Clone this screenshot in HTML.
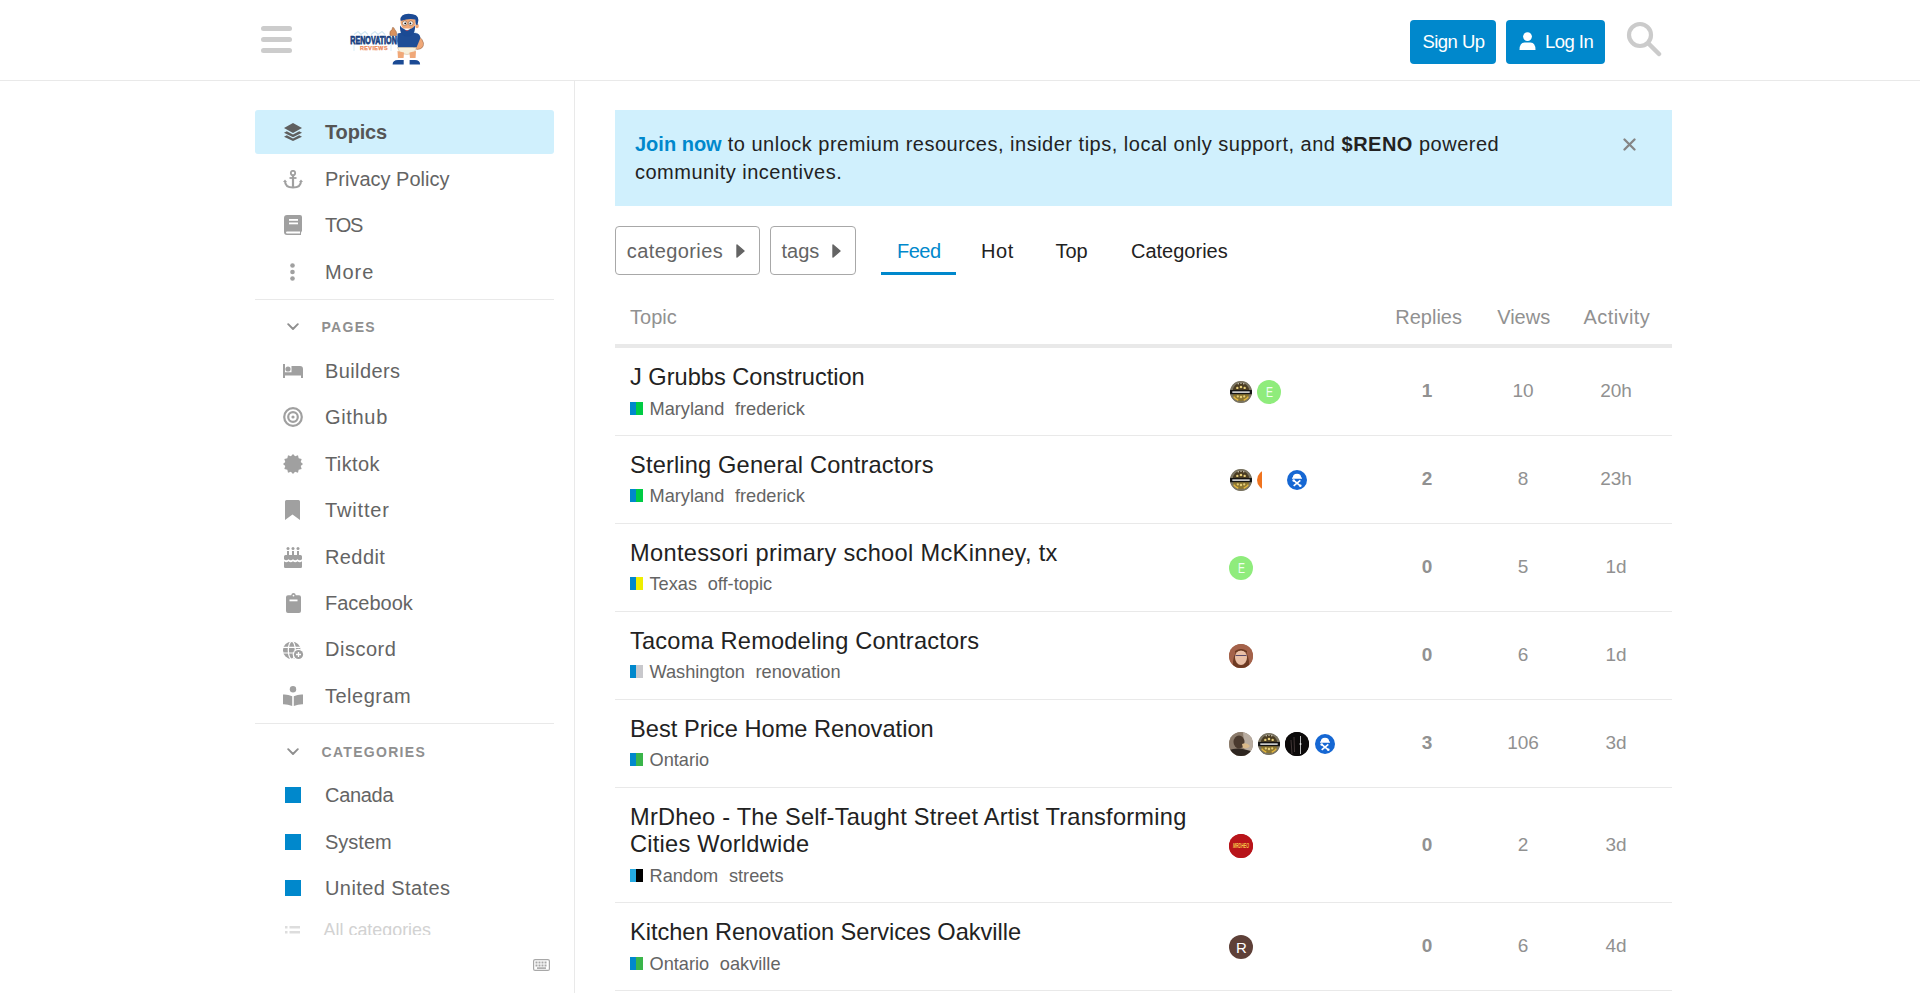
<!DOCTYPE html>
<html><head><meta charset="utf-8"><title>Renovation Reviews</title>
<style>
html,body{margin:0;padding:0;background:#fff;width:1920px;height:993px;overflow:hidden}
body{position:relative;font-family:"Liberation Sans",sans-serif}
.t{position:absolute;white-space:nowrap;line-height:1}
.r{position:absolute;display:block}
</style></head><body>
<div class="r" style="left:0px;top:80px;width:1920px;height:1px;background:#e9e9e9"></div>
<div class="r" style="left:261px;top:26px;width:31px;height:5px;background:#cccccc;border-radius:3px"></div>
<div class="r" style="left:261px;top:37px;width:31px;height:5px;background:#cccccc;border-radius:3px"></div>
<div class="r" style="left:261px;top:48px;width:31px;height:5px;background:#cccccc;border-radius:3px"></div>
<svg class="r" style="left:349px;top:13px;" width="78" height="52" viewBox="0 0 78 52">
<g>
<path d="M5 21.5 L9 18.5 L12 21.5 L16 18.5 L19 21.5 M22 21.5 L26 18.5 L29 21.5 L33 18.5 L36 21.5 M58 21 L64 18 L70 22" stroke="#d3e8f3" stroke-width="1.3" fill="none"/>
<path d="M5 27 L5 38 M42 27 L42 38" stroke="#d6ebf5" stroke-width="0.9"/>
<text x="1.3" y="30.5" font-family="Liberation Sans" font-weight="700" font-size="11" fill="#173f80" stroke="#173f80" stroke-width="0.75" textLength="46.5" lengthAdjust="spacingAndGlyphs">RENOVATION</text>
<text x="11" y="36.6" font-family="Liberation Sans" font-weight="700" font-size="5.4" fill="#ee8a58" stroke="#ee8a58" stroke-width="0.25" textLength="27.5" lengthAdjust="spacing">REVIEWS</text>
<path d="M41 22.5 Q40 18 43 16.5 L43.5 14.5 Q45 14 45.5 16 L46 17 Q48 18 47.5 22.5 Z" fill="#d9925e" stroke="#7a4a2a" stroke-width=".4"/>
<path d="M64 22 Q72 22 74.5 30 Q75 36 68 36.5 L64 34 Z" fill="#f0a878" stroke="#6b3b20" stroke-width=".4"/>
<path d="M48.5 20.5 Q58 17.5 68.5 20.5 Q72 22 71 26 L67.5 34.5 L49 34.5 Q47.5 28 48.5 20.5 Z" fill="#1e4d96"/>
<path d="M48.5 34.5 L67.5 34.5 L65 40 Q58 43 51 40 Z" fill="#f7f0dc" stroke="#bfa77f" stroke-width=".4"/>
<path d="M48.5 38 L55 39.5 L54.5 46 L49 46 Z M60.5 39.5 L67 38 L66.5 46 L61 46 Z" fill="#f0a878"/>
<rect x="48.5" y="45" width="6.5" height="2.5" fill="#fff"/><rect x="60.5" y="45" width="6.5" height="2.5" fill="#fff"/>
<path d="M43.6 51.5 Q43.6 47 49 47 L54.7 47 L54.7 51.5 Z M60.6 51.5 L60.6 47 L66 47 Q71.1 47 71.1 51.5 Z" fill="#1b4a94"/>
<path d="M51.5 6 Q50.8 16 58.3 17 Q66 16 66.8 9 L66.3 5 Q59 3 51.5 6 Z" fill="#f0a878"/>
<ellipse cx="68" cy="13" rx="1.8" ry="2.3" fill="#f0a878"/>
<path d="M51.5 7.5 Q51 0.8 59.5 0.8 Q69.4 0.8 69.4 7 L68.5 12 L66.8 11.5 L66.3 6.5 Q60 4.8 52.5 7.8Z" fill="#1b4a94"/>
<circle cx="55.8" cy="10.2" r="2.3" fill="#fff" stroke="#6b4a30" stroke-width=".5"/><circle cx="61.8" cy="10.2" r="2.3" fill="#fff" stroke="#6b4a30" stroke-width=".5"/>
<circle cx="56.2" cy="10.4" r="0.9" fill="#111"/><circle cx="61.4" cy="10.4" r="0.9" fill="#111"/>
<path d="M51 12.5 C50.5 21 54 23.5 58.3 23.5 C62.5 23.5 66.5 21 66 12.5 Q63 16.5 58.3 16.5 Q53.5 16.5 51 12.5Z" fill="#1b4a94"/>
<path d="M54.5 15.5 Q58 19 61.5 15.5 Z" fill="#fff"/><path d="M56 17 Q58 18.6 60 17 Z" fill="#d9534f"/>
</g></svg>
<div class="r" style="left:1410px;top:20px;width:86px;height:44px;background:#0088cc;border-radius:4px"></div>
<div class="t " style="left:1422.50px;top:33.44px;font-size:18.5px;color:#fff;font-weight:400;letter-spacing:-0.55px">Sign Up</div>
<div class="r" style="left:1506px;top:20px;width:99px;height:44px;background:#0088cc;border-radius:4px"></div>
<svg class="r" style="left:1519px;top:32px;" width="17" height="18" viewBox="0 0 17 18"><circle cx="8.5" cy="4.6" r="4.4" fill="#fff"/><path d="M0.5 18 Q0.5 10.5 5.5 10.5 L11.5 10.5 Q16.5 10.5 16.5 18 Z" fill="#fff"/></svg>
<div class="t " style="left:1545.00px;top:33.44px;font-size:18.5px;color:#fff;font-weight:400;letter-spacing:-0.55px">Log In</div>
<svg class="r" style="left:1626px;top:21px;" width="36" height="36" viewBox="0 0 36 36"><circle cx="14" cy="14" r="11" fill="none" stroke="#cbcbcb" stroke-width="4.2"/><path d="M22.5 22.5 L33 33" stroke="#cbcbcb" stroke-width="4.5" stroke-linecap="round"/></svg>
<div class="r" style="left:574px;top:81px;width:1px;height:912px;background:#e9e9e9"></div>
<div class="r" style="left:255px;top:110px;width:299px;height:44px;background:#d0f0fd;border-radius:3px"></div>
<svg class="r" style="left:284px;top:123px;" width="18" height="18" viewBox="0 0 18 18"><path d="M9 0 L18 5 L9 10 L0 5 Z" fill="#5f5f5f"/><path d="M2.8 8.2 L0 9.7 L9 14.3 L18 9.7 L15.2 8.2 L9 11.5 Z" fill="#5f5f5f"/><path d="M2.8 12.2 L0 13.7 L9 18 L18 13.7 L15.2 12.2 L9 15.5 Z" fill="#5f5f5f"/></svg>
<div class="t " style="left:325.00px;top:121.77px;font-size:20px;color:#555;font-weight:700;letter-spacing:-0.15px">Topics</div>
<div class="t " style="left:325.00px;top:168.97px;font-size:20px;color:#646464;font-weight:400;">Privacy Policy</div>
<div class="t " style="left:325.00px;top:214.87px;font-size:20px;color:#646464;font-weight:400;letter-spacing:-1.2px">TOS</div>
<div class="t " style="left:325.00px;top:262.07px;font-size:20px;color:#646464;font-weight:400;letter-spacing:0.9px">More</div>
<svg class="r" style="left:283px;top:170px;" width="20" height="19" viewBox="0 0 20 19"><circle cx="10" cy="3" r="2.2" fill="none" stroke="#a0a0a0" stroke-width="1.8"/><path d="M10 5 L10 17.5" stroke="#a0a0a0" stroke-width="2.2"/><path d="M6.5 8 L13.5 8" stroke="#a0a0a0" stroke-width="1.8"/><path d="M2 11 Q2 17.5 10 17.5 Q18 17.5 18 11" fill="none" stroke="#a0a0a0" stroke-width="2"/><path d="M0 12 L2 9.5 L4 12Z M16 12 L18 9.5 L20 12Z" fill="#a0a0a0"/></svg>
<svg class="r" style="left:284px;top:215px;" width="18" height="20" viewBox="0 0 18 20"><path d="M3 0 L16 0 Q18 0 18 2 L18 16 Q17 17 17 18 L17 20 L3 20 Q0 20 0 17 L0 3 Q0 0 3 0Z" fill="#a0a0a0"/><rect x="5" y="4" width="9" height="1.8" fill="#fff"/><rect x="5" y="7.5" width="9" height="1.8" fill="#fff"/><path d="M3 16.5 L16 16.5 L16 18.5 L3 18.5 Q2 18.5 2 17.5 Q2 16.5 3 16.5Z" fill="#fff"/></svg>
<svg class="r" style="left:289px;top:263px;" width="7" height="18" viewBox="0 0 7 18"><circle cx="3.5" cy="2.5" r="2.3" fill="#a0a0a0"/><circle cx="3.5" cy="9" r="2.3" fill="#a0a0a0"/><circle cx="3.5" cy="15.5" r="2.3" fill="#a0a0a0"/></svg>
<div class="r" style="left:255px;top:299px;width:299px;height:1px;background:#e9e9e9"></div>
<svg class="r" style="left:287px;top:323px;" width="12" height="8" viewBox="0 0 12 8"><path d="M1.2 1.2 L6 6 L10.8 1.2" fill="none" stroke="#8f8f8f" stroke-width="1.9" stroke-linecap="round" stroke-linejoin="round"/></svg>
<div class="t " style="left:321.50px;top:320.35px;font-size:14px;color:#8f8f8f;font-weight:700;letter-spacing:1.3px">PAGES</div>
<div class="t " style="left:325.00px;top:360.67px;font-size:20px;color:#646464;font-weight:400;letter-spacing:0.4px">Builders</div>
<div class="t " style="left:325.00px;top:407.14px;font-size:20px;color:#646464;font-weight:400;letter-spacing:0.67px">Github</div>
<div class="t " style="left:325.00px;top:453.61px;font-size:20px;color:#646464;font-weight:400;letter-spacing:0.4px">Tiktok</div>
<div class="t " style="left:325.00px;top:500.08px;font-size:20px;color:#646464;font-weight:400;letter-spacing:0.85px">Twitter</div>
<div class="t " style="left:325.00px;top:546.55px;font-size:20px;color:#646464;font-weight:400;letter-spacing:0.4px">Reddit</div>
<div class="t " style="left:325.00px;top:593.02px;font-size:20px;color:#646464;font-weight:400;letter-spacing:0px">Facebook</div>
<div class="t " style="left:325.00px;top:639.49px;font-size:20px;color:#646464;font-weight:400;letter-spacing:0.5px">Discord</div>
<div class="t " style="left:325.00px;top:685.96px;font-size:20px;color:#646464;font-weight:400;letter-spacing:0.5px">Telegram</div>
<svg class="r" style="left:283px;top:364px;" width="20" height="14" viewBox="0 0 20 14"><rect x="0" y="0" width="2" height="14" fill="#a0a0a0"/><circle cx="5" cy="5" r="2.6" fill="#a0a0a0"/><path d="M8.5 2 L17 2 Q20 2 20 5 L20 14 L18 14 L18 11.5 L2 11.5 L2 8.2 L8.5 8.2Z" fill="#a0a0a0"/></svg>
<svg class="r" style="left:283px;top:407px;" width="20" height="20" viewBox="0 0 20 20"><circle cx="10" cy="10" r="8.8" fill="none" stroke="#a0a0a0" stroke-width="2.2"/><circle cx="10" cy="10" r="4.8" fill="none" stroke="#a0a0a0" stroke-width="2.2"/><circle cx="10" cy="10" r="1.6" fill="#a0a0a0"/></svg>
<svg class="r" style="left:283px;top:454px;" width="20" height="20" viewBox="0 0 20 20"><polygon points="20.00,10.00 17.73,12.07 18.66,15.00 15.66,15.66 15.00,18.66 12.07,17.73 10.00,20.00 7.93,17.73 5.00,18.66 4.34,15.66 1.34,15.00 2.27,12.07 0.00,10.00 2.27,7.93 1.34,5.00 4.34,4.34 5.00,1.34 7.93,2.27 10.00,0.00 12.07,2.27 15.00,1.34 15.66,4.34 18.66,5.00 17.73,7.93" fill="#a0a0a0"/></svg>
<svg class="r" style="left:285px;top:500px;" width="15" height="20" viewBox="0 0 15 20"><path d="M1.5 0 L13.5 0 Q15 0 15 1.5 L15 20 L7.5 14.5 L0 20 L0 1.5 Q0 0 1.5 0Z" fill="#a0a0a0"/></svg>
<svg class="r" style="left:284px;top:547px;" width="18" height="21" viewBox="0 0 18 21"><g fill="#a0a0a0"><circle cx="4" cy="1.6" r="1.5"/><circle cx="9" cy="1.6" r="1.5"/><circle cx="14" cy="1.6" r="1.5"/><rect x="3" y="4" width="2" height="4.5"/><rect x="8" y="4" width="2" height="4.5"/><rect x="13" y="4" width="2" height="4.5"/><path d="M1.5 8 L16.5 8 Q18 8 18 9.5 L18 12.3 Q15.8 14 13.5 12.3 Q11.2 14 9 12.3 Q6.8 14 4.5 12.3 Q2.2 14 0 12.3 L0 9.5 Q0 8 1.5 8Z"/><path d="M0 14.3 Q2.2 16 4.5 14.3 Q6.8 16 9 14.3 Q11.2 16 13.5 14.3 Q15.8 16 18 14.3 L18 19.8 Q18 21 16.8 21 L1.2 21 Q0 21 0 19.8Z"/></g></svg>
<svg class="r" style="left:285.5px;top:593px;" width="15" height="20" viewBox="0 0 15 20"><path d="M7.5 0 Q9.5 0 9.8 2.2 L13 2.2 Q15 2.2 15 4.2 L15 18 Q15 20 13 20 L2 20 Q0 20 0 18 L0 4.2 Q0 2.2 2 2.2 L5.2 2.2 Q5.5 0 7.5 0Z" fill="#a0a0a0"/><rect x="3.5" y="6.5" width="8" height="1.8" fill="#fff"/><circle cx="7.5" cy="2.6" r="0.9" fill="#fff"/></svg>
<svg class="r" style="left:283px;top:641px;" width="21" height="19" viewBox="0 0 21 19"><circle cx="8.8" cy="9.2" r="8.8" fill="#a0a0a0"/><path d="M0 6.3 L17.6 6.3 M0 12 L17.6 12" stroke="#fff" stroke-width="1.2"/><ellipse cx="8.8" cy="9.2" rx="3.5" ry="8.8" fill="none" stroke="#fff" stroke-width="1.2"/><circle cx="15.5" cy="13.5" r="5.8" fill="#fff"/><circle cx="15.5" cy="13.5" r="4.6" fill="#a0a0a0"/><path d="M15.5 11 L15.5 16 M13 13.5 L18 13.5" stroke="#fff" stroke-width="1.3"/></svg>
<svg class="r" style="left:283px;top:686px;" width="20" height="20" viewBox="0 0 20 20"><circle cx="10" cy="3.2" r="3.2" fill="#a0a0a0"/><path d="M0 8.5 Q4.5 8 9.2 10.2 L9.2 20 Q4.5 18 0 18.2Z M20 8.5 Q15.5 8 10.8 10.2 L10.8 20 Q15.5 18 20 18.2Z" fill="#a0a0a0"/></svg>
<div class="r" style="left:255px;top:723px;width:299px;height:1px;background:#e9e9e9"></div>
<svg class="r" style="left:287px;top:748px;" width="12" height="8" viewBox="0 0 12 8"><path d="M1.2 1.2 L6 6 L10.8 1.2" fill="none" stroke="#8f8f8f" stroke-width="1.9" stroke-linecap="round" stroke-linejoin="round"/></svg>
<div class="t " style="left:321.50px;top:744.95px;font-size:14px;color:#8f8f8f;font-weight:700;letter-spacing:1.3px">CATEGORIES</div>
<div class="r" style="left:285px;top:787.0px;width:16px;height:16px;background:#0088cc"></div>
<div class="t " style="left:325.00px;top:784.57px;font-size:20px;color:#646464;font-weight:400;letter-spacing:-0.3px">Canada</div>
<div class="r" style="left:285px;top:834.2px;width:16px;height:16px;background:#0088cc"></div>
<div class="t " style="left:325.00px;top:831.77px;font-size:20px;color:#646464;font-weight:400;letter-spacing:0px">System</div>
<div class="r" style="left:285px;top:880.1px;width:16px;height:16px;background:#0088cc"></div>
<div class="t " style="left:325.00px;top:877.67px;font-size:20px;color:#646464;font-weight:400;letter-spacing:0.42px">United States</div>
<div class="r" style="left:255px;top:910px;width:319px;height:25px;overflow:hidden">
<div class="t " style="left:68.60px;top:12.45px;font-size:17.9px;color:#d2d2d2;font-weight:400;">All categories</div>
<svg class="r" style="left:30px;top:16px;" width="15" height="12" viewBox="0 0 15 12"><rect x="0" y="0" width="2.5" height="2.5" fill="#ddd"/><rect x="4.5" y="0" width="10.5" height="2.5" fill="#ddd"/><rect x="0" y="5" width="2.5" height="2.5" fill="#ddd"/><rect x="4.5" y="5" width="10.5" height="2.5" fill="#ddd"/></svg>
</div>
<svg class="r" style="left:533px;top:959px;" width="17" height="12" viewBox="0 0 17 12"><rect x="0.6" y="0.6" width="15.8" height="10.8" rx="1.5" fill="none" stroke="#a8a8a8" stroke-width="1.2"/><g fill="#a8a8a8"><rect x="2.5" y="2.5" width="2" height="2"/><rect x="5.5" y="2.5" width="2" height="2"/><rect x="8.5" y="2.5" width="2" height="2"/><rect x="11.5" y="2.5" width="2" height="2"/><rect x="2.5" y="5.5" width="2" height="2"/><rect x="5.5" y="5.5" width="2" height="2"/><rect x="8.5" y="5.5" width="2" height="2"/><rect x="11.5" y="5.5" width="2" height="2"/><rect x="4" y="8.3" width="9" height="1.6"/></g></svg>
<div class="r" style="left:615px;top:110px;width:1057px;height:96px;background:#d0f0fd"></div>
<div class="t" style="left:635px;top:129.97px;width:1050px;font-size:20px;line-height:28px;color:#222;letter-spacing:0.5px"><b style="color:#0088cc;letter-spacing:0">Join now</b> to unlock premium resources, insider tips, local only support, and <b>$RENO</b> powered<br>community incentives.</div>
<svg class="r" style="left:1623px;top:138px;" width="13" height="13" viewBox="0 0 13 13"><path d="M1.5 1.5 L11.5 11.5 M11.5 1.5 L1.5 11.5" stroke="#858585" stroke-width="2.3" stroke-linecap="round"/></svg>
<div class="r" style="left:615px;top:226px;width:145px;height:49px;box-sizing:border-box;border:1px solid #a8a8a8;border-radius:4px"></div>
<div class="t " style="left:626.80px;top:240.67px;font-size:20px;color:#646464;font-weight:400;letter-spacing:0.4px">categories</div>
<svg class="r" style="left:736px;top:244px;" width="9" height="14" viewBox="0 0 9 14"><path d="M1 1 L8 7 L1 13Z" fill="#646464" stroke="#646464" stroke-width="1.4" stroke-linejoin="round"/></svg>
<div class="r" style="left:770px;top:226px;width:86px;height:49px;box-sizing:border-box;border:1px solid #a8a8a8;border-radius:4px"></div>
<div class="t " style="left:781.50px;top:240.67px;font-size:20px;color:#646464;font-weight:400;">tags</div>
<svg class="r" style="left:832px;top:244px;" width="9" height="14" viewBox="0 0 9 14"><path d="M1 1 L8 7 L1 13Z" fill="#646464" stroke="#646464" stroke-width="1.4" stroke-linejoin="round"/></svg>
<div class="t " style="left:897.00px;top:240.87px;font-size:20px;color:#0088cc;font-weight:400;letter-spacing:-0.5px">Feed</div>
<div class="r" style="left:881px;top:272px;width:75px;height:3px;background:#0088cc"></div>
<div class="t " style="left:981.00px;top:240.87px;font-size:20px;color:#222;font-weight:400;letter-spacing:0.6px">Hot</div>
<div class="t " style="left:1055.40px;top:240.87px;font-size:20px;color:#222;font-weight:400;">Top</div>
<div class="t " style="left:1131.00px;top:240.87px;font-size:20px;color:#222;font-weight:400;">Categories</div>
<div class="t " style="left:630.10px;top:306.97px;font-size:20px;color:#919191;font-weight:400;">Topic</div>
<div class="t " style="left:1395.30px;top:306.97px;font-size:20px;color:#919191;font-weight:400;">Replies</div>
<div class="t " style="left:1497.20px;top:306.97px;font-size:20px;color:#919191;font-weight:400;">Views</div>
<div class="t " style="left:1583.60px;top:306.97px;font-size:20px;color:#919191;font-weight:400;letter-spacing:0.4px">Activity</div>
<div class="r" style="left:615px;top:344px;width:1057px;height:4px;background:#e9e9e9"></div>
<div class="t " style="left:630.00px;top:366.12px;font-size:23.6px;color:#222;font-weight:400;letter-spacing:0px">J Grubbs Construction</div>
<div class="r" style="left:630px;top:402px;width:6px;height:13px;background:#0088cc"></div>
<div class="r" style="left:636px;top:402px;width:7px;height:13px;background:#00cc44"></div>
<div class="t " style="left:649.50px;top:399.59px;font-size:18.2px;color:#646464;font-weight:400;">Maryland</div>
<div class="t" style="left:649.5px;top:399.59px;font-size:18.2px;color:#646464"><span style="visibility:hidden">Maryland</span><span style="margin-left:10.7px">frederick</span></div>
<div class="r" style="left:615px;top:435px;width:1057px;height:1px;background:#e9e9e9"></div>
<div class="t" style="left:1377px;width:100px;text-align:center;top:381.42px;font-size:19px;color:#919191;font-weight:700">1</div>
<div class="t" style="left:1473px;width:100px;text-align:center;top:381.42px;font-size:19px;color:#919191;font-weight:400">10</div>
<div class="t" style="left:1566px;width:100px;text-align:center;top:381.42px;font-size:19px;color:#919191;font-weight:400">20h</div>
<div class="r" style="left:1230px;top:381px;width:22px;height:22px;border-radius:50%;overflow:hidden;background:#7a7462"><svg width="22" height="22" viewBox="0 0 24 24" style="display:block"><circle cx="12" cy="12" r="12" fill="#7a7462"/><path d="M3 11 A9 9 0 0 1 21 11 Z" fill="#4a3c22"/><path d="M3 13 A9 9 0 0 0 21 13 Z" fill="#8a7430"/><rect x="0" y="9.8" width="24" height="4.6" fill="#141414"/><rect x="2.5" y="11.2" width="19" height="1.9" fill="#c8c8c8"/><g fill="#e6cf7a"><circle cx="8" cy="7.5" r="1.3"/><circle cx="12" cy="6.5" r="1.4"/><circle cx="16" cy="7.5" r="1.3"/><circle cx="8.5" cy="16.8" r="1.2"/><circle cx="12" cy="17.5" r="1.3"/><circle cx="15.5" cy="16.8" r="1.2"/></g><g fill="#d4d0c0"><circle cx="9" cy="3" r="0.8"/><circle cx="12" cy="2.5" r="0.8"/><circle cx="15" cy="3" r="0.8"/></g><path d="M4 17 Q6 20 9 21 M20 17 Q18 20 15 21" stroke="#e2b53a" stroke-width="1.6" fill="none"/></svg></div>
<div class="r" style="left:1257px;top:380px;width:24px;height:24px;background:#8fec7c;border-radius:50%"></div>
<div class="t " style="left:1266.00px;top:383.68px;font-size:15.5px;color:#effff0;font-weight:400;transform:scaleX(0.68);transform-origin:0 0">E</div>
<div class="t " style="left:630.00px;top:453.92px;font-size:23.6px;color:#222;font-weight:400;letter-spacing:0.17px">Sterling General Contractors</div>
<div class="r" style="left:630px;top:489px;width:6px;height:13px;background:#0088cc"></div>
<div class="r" style="left:636px;top:489px;width:7px;height:13px;background:#00cc44"></div>
<div class="t " style="left:649.50px;top:486.59px;font-size:18.2px;color:#646464;font-weight:400;">Maryland</div>
<div class="t" style="left:649.5px;top:486.59px;font-size:18.2px;color:#646464"><span style="visibility:hidden">Maryland</span><span style="margin-left:10.7px">frederick</span></div>
<div class="r" style="left:615px;top:523px;width:1057px;height:1px;background:#e9e9e9"></div>
<div class="t" style="left:1377px;width:100px;text-align:center;top:469.42px;font-size:19px;color:#919191;font-weight:700">2</div>
<div class="t" style="left:1473px;width:100px;text-align:center;top:469.42px;font-size:19px;color:#919191;font-weight:400">8</div>
<div class="t" style="left:1566px;width:100px;text-align:center;top:469.42px;font-size:19px;color:#919191;font-weight:400">23h</div>
<div class="r" style="left:1230px;top:469px;width:22px;height:22px;border-radius:50%;overflow:hidden;background:#7a7462"><svg width="22" height="22" viewBox="0 0 24 24" style="display:block"><circle cx="12" cy="12" r="12" fill="#7a7462"/><path d="M3 11 A9 9 0 0 1 21 11 Z" fill="#4a3c22"/><path d="M3 13 A9 9 0 0 0 21 13 Z" fill="#8a7430"/><rect x="0" y="9.8" width="24" height="4.6" fill="#141414"/><rect x="2.5" y="11.2" width="19" height="1.9" fill="#c8c8c8"/><g fill="#e6cf7a"><circle cx="8" cy="7.5" r="1.3"/><circle cx="12" cy="6.5" r="1.4"/><circle cx="16" cy="7.5" r="1.3"/><circle cx="8.5" cy="16.8" r="1.2"/><circle cx="12" cy="17.5" r="1.3"/><circle cx="15.5" cy="16.8" r="1.2"/></g><g fill="#d4d0c0"><circle cx="9" cy="3" r="0.8"/><circle cx="12" cy="2.5" r="0.8"/><circle cx="15" cy="3" r="0.8"/></g><path d="M4 17 Q6 20 9 21 M20 17 Q18 20 15 21" stroke="#e2b53a" stroke-width="1.6" fill="none"/></svg></div>
<div class="r" style="left:1257px;top:470px;width:5px;height:20px;overflow:hidden"><div style="width:20px;height:20px;border-radius:50%;background:#f0731e"></div></div>
<div class="r" style="left:1287px;top:470px;width:20px;height:20px;border-radius:50%;overflow:hidden;background:#1567d3"><svg width="20" height="20" viewBox="0 0 24 24" style="display:block"><path d="M7 9.5 Q7 4.5 12 4.5 Q17 4.5 17 9.5 Z" fill="#fff"/><rect x="6" y="9" width="12" height="1.5" fill="#fff"/><path d="M8 12.5 L16 19 M16 12.5 L8 19" stroke="#fff" stroke-width="2"/><circle cx="8" cy="12.5" r="1.5" fill="#fff"/><circle cx="16" cy="19" r="1.5" fill="#fff"/></svg></div>
<div class="t " style="left:630.00px;top:542.32px;font-size:23.6px;color:#222;font-weight:400;letter-spacing:0.33px">Montessori primary school McKinney, tx</div>
<div class="r" style="left:630px;top:577px;width:6px;height:13px;background:#0088cc"></div>
<div class="r" style="left:636px;top:577px;width:7px;height:13px;background:#eeee00"></div>
<div class="t " style="left:649.50px;top:574.59px;font-size:18.2px;color:#646464;font-weight:400;">Texas</div>
<div class="t" style="left:649.5px;top:574.59px;font-size:18.2px;color:#646464"><span style="visibility:hidden">Texas</span><span style="margin-left:10.7px">off-topic</span></div>
<div class="r" style="left:615px;top:611px;width:1057px;height:1px;background:#e9e9e9"></div>
<div class="t" style="left:1377px;width:100px;text-align:center;top:557.42px;font-size:19px;color:#919191;font-weight:700">0</div>
<div class="t" style="left:1473px;width:100px;text-align:center;top:557.42px;font-size:19px;color:#919191;font-weight:400">5</div>
<div class="t" style="left:1566px;width:100px;text-align:center;top:557.42px;font-size:19px;color:#919191;font-weight:400">1d</div>
<div class="r" style="left:1229px;top:556px;width:24px;height:24px;background:#8fec7c;border-radius:50%"></div>
<div class="t " style="left:1238.00px;top:559.68px;font-size:15.5px;color:#effff0;font-weight:400;transform:scaleX(0.68);transform-origin:0 0">E</div>
<div class="t " style="left:630.00px;top:630.32px;font-size:23.6px;color:#222;font-weight:400;letter-spacing:0.2px">Tacoma Remodeling Contractors</div>
<div class="r" style="left:630px;top:665px;width:6px;height:13px;background:#0088cc"></div>
<div class="r" style="left:636px;top:665px;width:7px;height:13px;background:#c8c8cc"></div>
<div class="t " style="left:649.50px;top:662.59px;font-size:18.2px;color:#646464;font-weight:400;">Washington</div>
<div class="t" style="left:649.5px;top:662.59px;font-size:18.2px;color:#646464"><span style="visibility:hidden">Washington</span><span style="margin-left:10.7px">renovation</span></div>
<div class="r" style="left:615px;top:699px;width:1057px;height:1px;background:#e9e9e9"></div>
<div class="t" style="left:1377px;width:100px;text-align:center;top:645.42px;font-size:19px;color:#919191;font-weight:700">0</div>
<div class="t" style="left:1473px;width:100px;text-align:center;top:645.42px;font-size:19px;color:#919191;font-weight:400">6</div>
<div class="t" style="left:1566px;width:100px;text-align:center;top:645.42px;font-size:19px;color:#919191;font-weight:400">1d</div>
<div class="r" style="left:1229px;top:644px;width:24px;height:24px;border-radius:50%;overflow:hidden;background:#a4624a"><svg width="24" height="24" viewBox="0 0 24 24" style="display:block"><rect width="24" height="24" fill="#a4624a"/><path d="M4 24 Q3 8 12 5 Q21 8 20 24Z" fill="#6e3a22"/><ellipse cx="12" cy="13.5" rx="6" ry="7.5" fill="#eabfa6"/><path d="M6.5 11.5 L17.5 11.5" stroke="#5a4a6a" stroke-width="1.1"/><path d="M6 9 Q12 4 18 9 L18 7 Q12 3 6 7Z" fill="#6e3a22"/></svg></div>
<div class="t " style="left:630.00px;top:718.32px;font-size:23.6px;color:#222;font-weight:400;letter-spacing:0.03px">Best Price Home Renovation</div>
<div class="r" style="left:630px;top:753px;width:6px;height:13px;background:#0088cc"></div>
<div class="r" style="left:636px;top:753px;width:7px;height:13px;background:#3ab54a"></div>
<div class="t " style="left:649.50px;top:750.59px;font-size:18.2px;color:#646464;font-weight:400;">Ontario</div>
<div class="r" style="left:615px;top:787px;width:1057px;height:1px;background:#e9e9e9"></div>
<div class="t" style="left:1377px;width:100px;text-align:center;top:733.42px;font-size:19px;color:#919191;font-weight:700">3</div>
<div class="t" style="left:1473px;width:100px;text-align:center;top:733.42px;font-size:19px;color:#919191;font-weight:400">106</div>
<div class="t" style="left:1566px;width:100px;text-align:center;top:733.42px;font-size:19px;color:#919191;font-weight:400">3d</div>
<div class="r" style="left:1229px;top:732px;width:24px;height:24px;border-radius:50%;overflow:hidden;background:#8a7a6a"><svg width="24" height="24" viewBox="0 0 24 24" style="display:block"><rect width="24" height="24" fill="#b8aca0"/><path d="M2 0 L14 0 L16 24 L0 24 L0 4Z" fill="#8a7a6a"/><ellipse cx="10" cy="10" rx="5.5" ry="6.5" fill="#4a3a2e"/><path d="M13 12 Q18 10 21 14 Q19 17 14 16Z" fill="#d9b98a"/><path d="M0 18 Q10 14 24 20 L24 24 L0 24Z" fill="#2e2620"/></svg></div>
<div class="r" style="left:1258px;top:733px;width:22px;height:22px;border-radius:50%;overflow:hidden;background:#7a7462"><svg width="22" height="22" viewBox="0 0 24 24" style="display:block"><circle cx="12" cy="12" r="12" fill="#7a7462"/><path d="M3 11 A9 9 0 0 1 21 11 Z" fill="#4a3c22"/><path d="M3 13 A9 9 0 0 0 21 13 Z" fill="#8a7430"/><rect x="0" y="9.8" width="24" height="4.6" fill="#141414"/><rect x="2.5" y="11.2" width="19" height="1.9" fill="#c8c8c8"/><g fill="#e6cf7a"><circle cx="8" cy="7.5" r="1.3"/><circle cx="12" cy="6.5" r="1.4"/><circle cx="16" cy="7.5" r="1.3"/><circle cx="8.5" cy="16.8" r="1.2"/><circle cx="12" cy="17.5" r="1.3"/><circle cx="15.5" cy="16.8" r="1.2"/></g><g fill="#d4d0c0"><circle cx="9" cy="3" r="0.8"/><circle cx="12" cy="2.5" r="0.8"/><circle cx="15" cy="3" r="0.8"/></g><path d="M4 17 Q6 20 9 21 M20 17 Q18 20 15 21" stroke="#e2b53a" stroke-width="1.6" fill="none"/></svg></div>
<div class="r" style="left:1285px;top:732px;width:24px;height:24px;border-radius:50%;overflow:hidden;background:#0c0a0a"><svg width="24" height="24" viewBox="0 0 24 24" style="display:block"><rect width="24" height="24" fill="#0c0a0a"/><path d="M15.5 4 L15.5 22" stroke="#d0d0d0" stroke-width="0.9"/><circle cx="15.5" cy="12" r="1" fill="#e8e8e8"/><path d="M6 8 L7 22 M9 5 L9.5 20" stroke="#5a4a4a" stroke-width="0.7"/></svg></div>
<div class="r" style="left:1315px;top:734px;width:20px;height:20px;border-radius:50%;overflow:hidden;background:#1567d3"><svg width="20" height="20" viewBox="0 0 24 24" style="display:block"><path d="M7 9.5 Q7 4.5 12 4.5 Q17 4.5 17 9.5 Z" fill="#fff"/><rect x="6" y="9" width="12" height="1.5" fill="#fff"/><path d="M8 12.5 L16 19 M16 12.5 L8 19" stroke="#fff" stroke-width="2"/><circle cx="8" cy="12.5" r="1.5" fill="#fff"/><circle cx="16" cy="19" r="1.5" fill="#fff"/></svg></div>
<div class="t " style="left:630.00px;top:806.02px;font-size:23.6px;color:#222;font-weight:400;letter-spacing:0.25px">MrDheo - The Self-Taught Street Artist Transforming</div>
<div class="t " style="left:630.00px;top:832.52px;font-size:23.6px;color:#222;font-weight:400;letter-spacing:0.25px">Cities Worldwide</div>
<div class="r" style="left:630px;top:869px;width:6px;height:13px;background:#25aae1"></div>
<div class="r" style="left:636px;top:869px;width:7px;height:13px;background:#000000"></div>
<div class="t " style="left:649.50px;top:866.59px;font-size:18.2px;color:#646464;font-weight:400;">Random</div>
<div class="t" style="left:649.5px;top:866.59px;font-size:18.2px;color:#646464"><span style="visibility:hidden">Random</span><span style="margin-left:10.7px">streets</span></div>
<div class="r" style="left:615px;top:902px;width:1057px;height:1px;background:#e9e9e9"></div>
<div class="t" style="left:1377px;width:100px;text-align:center;top:834.92px;font-size:19px;color:#919191;font-weight:700">0</div>
<div class="t" style="left:1473px;width:100px;text-align:center;top:834.92px;font-size:19px;color:#919191;font-weight:400">2</div>
<div class="t" style="left:1566px;width:100px;text-align:center;top:834.92px;font-size:19px;color:#919191;font-weight:400">3d</div>
<div class="r" style="left:1229px;top:834px;width:24px;height:24px;border-radius:50%;overflow:hidden;background:#b8141a"><svg width="24" height="24" viewBox="0 0 24 24" style="display:block"><rect width="24" height="24" fill="#b8141a"/><text x="12" y="14.2" text-anchor="middle" font-family="Liberation Sans" font-weight="700" font-style="italic" font-size="6.3" fill="#f7c94a" textLength="16" lengthAdjust="spacingAndGlyphs">MRDHEO</text></svg></div>
<div class="t " style="left:630.00px;top:920.82px;font-size:23.6px;color:#222;font-weight:400;letter-spacing:-0.03px">Kitchen Renovation Services Oakville</div>
<div class="r" style="left:630px;top:957px;width:6px;height:13px;background:#0088cc"></div>
<div class="r" style="left:636px;top:957px;width:7px;height:13px;background:#3ab54a"></div>
<div class="t " style="left:649.50px;top:954.59px;font-size:18.2px;color:#646464;font-weight:400;">Ontario</div>
<div class="t" style="left:649.5px;top:954.59px;font-size:18.2px;color:#646464"><span style="visibility:hidden">Ontario</span><span style="margin-left:10.7px">oakville</span></div>
<div class="r" style="left:615px;top:990px;width:1057px;height:1px;background:#e9e9e9"></div>
<div class="t" style="left:1377px;width:100px;text-align:center;top:936.42px;font-size:19px;color:#919191;font-weight:700">0</div>
<div class="t" style="left:1473px;width:100px;text-align:center;top:936.42px;font-size:19px;color:#919191;font-weight:400">6</div>
<div class="t" style="left:1566px;width:100px;text-align:center;top:936.42px;font-size:19px;color:#919191;font-weight:400">4d</div>
<div class="r" style="left:1229px;top:935px;width:24px;height:24px;background:#5e4038;border-radius:50%"></div>
<div class="t " style="left:1236.00px;top:939.80px;font-size:15px;color:#fff;font-weight:400;">R</div>
</body></html>
